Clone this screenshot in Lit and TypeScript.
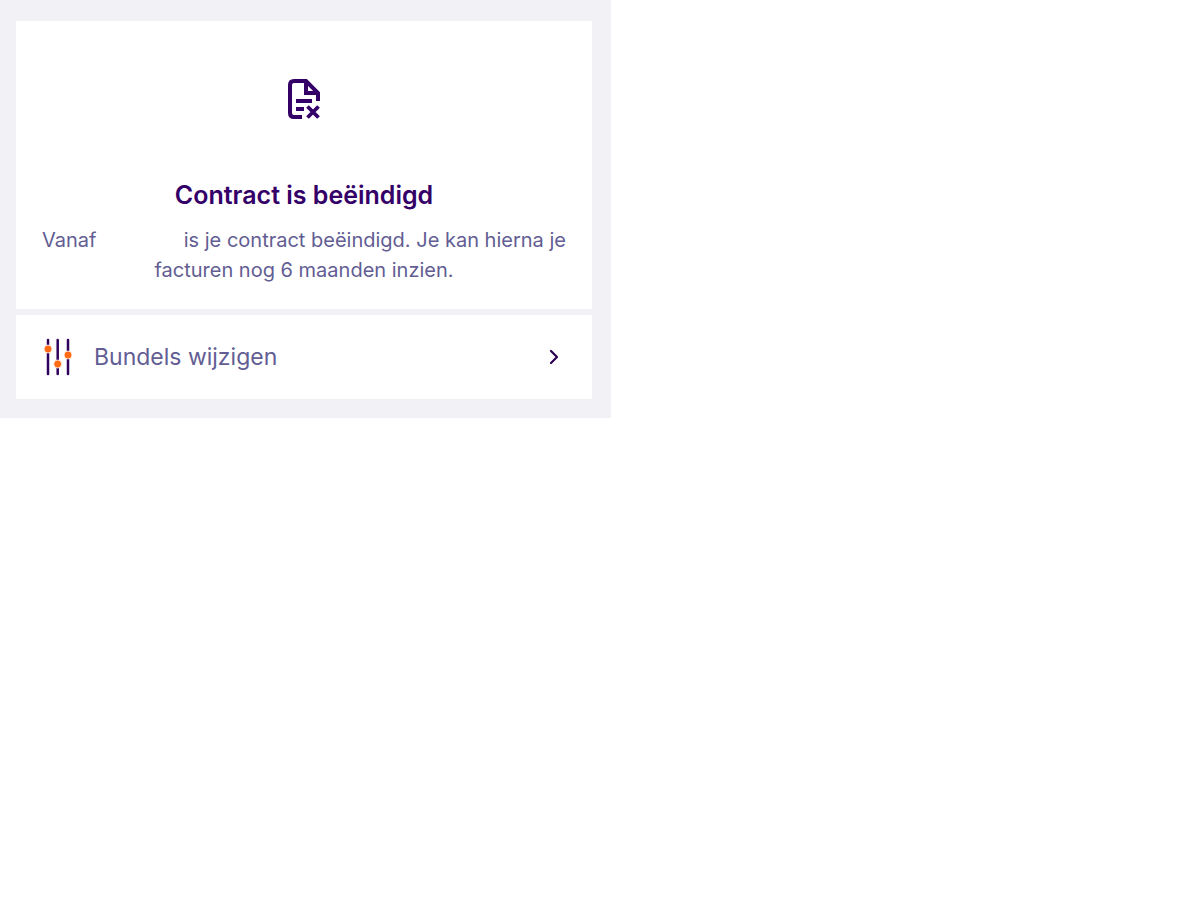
import { LitElement, html, css } from "lit";
import { customElement } from "lit/decorators.js";

@customElement("app-root")
export class AppRoot extends LitElement {
  static styles = css`
    :host {
      display: block;
      font-family: Inter, "Liberation Sans", sans-serif;
      color: #625d93;
    }
    .panel {
      box-sizing: border-box;
      max-width: 611px;
      padding: 21px 19px 19px 16px;
      background: #f2f1f6;
      display: flex;
      flex-direction: column;
      gap: 6px;
    }
    .notice {
      background: #fff;
      padding: 54px 24px 24px;
      display: flex;
      flex-direction: column;
      align-items: center;
      text-align: center;
    }
    .notice-icon {
      width: 48px;
      height: 48px;
    }
    .title {
      margin: 54px 0 12px;
      font-size: 25px;
      line-height: 36px;
      font-weight: 600;
      color: #340068;
    }
    .text {
      margin: 0;
      font-size: 20px;
      line-height: 30px;
    }
    .date {
      display: inline-block;
      width: 76px;
    }
    .row {
      background: #fff;
      min-height: 84px;
      box-sizing: border-box;
      padding: 0 30px 0 26px;
      display: flex;
      align-items: center;
      gap: 20px;
      font-size: 23px;
      line-height: 30px;
      color: inherit;
      text-decoration: none;
    }
    .label {
      flex: 1;
    }
    .sliders {
      width: 32px;
      height: 40px;
    }
    .chevron {
      width: 16px;
      height: 20px;
    }
  `;

  render() {
    return html`
      <main class="panel">
        <section class="notice">
          <svg class="notice-icon" viewBox="0 0 48 48" fill="none" stroke="#340068" stroke-width="4" aria-hidden="true">
            <path d="M22 42H14Q10 42 10 38V10Q10 6 14 6H26L38 18V26" />
            <path d="M26 6V18H38" />
            <path d="M16 26H32M16 34H24" />
            <path d="M27.5 31.5L38.5 42.5M38.5 31.5L27.5 42.5" stroke-width="3.8" />
          </svg>
          <h1 class="title">Contract is beëindigd</h1>
          <p class="text">
            Vanaf <span class="date"></span> is je contract beëindigd. Je kan hierna je facturen nog 6 maanden inzien.
          </p>
        </section>
        <a class="row" href="#bundels">
          <svg class="sliders" viewBox="0 0 32 40" aria-hidden="true">
            <path
              d="M6 3V37M15.7 3V37M26 3V37"
              stroke="#2f005c"
              stroke-width="2.5"
              stroke-linecap="round"
            />
            <g fill="#ff6a13" stroke="#fff" stroke-width="0.8">
              <circle cx="6" cy="12" r="4" />
              <circle cx="15.7" cy="27" r="4" />
              <circle cx="26" cy="18" r="4" />
            </g>
          </svg>
          <span class="label">Bundels wijzigen</span>
          <svg class="chevron" viewBox="0 0 16 20" aria-hidden="true">
            <path
              d="M5 4L11 10L5 16"
              fill="none"
              stroke="#2a0050"
              stroke-width="2.2"
              stroke-linecap="round"
              stroke-linejoin="round"
            />
          </svg>
        </a>
      </main>
    `;
  }
}
